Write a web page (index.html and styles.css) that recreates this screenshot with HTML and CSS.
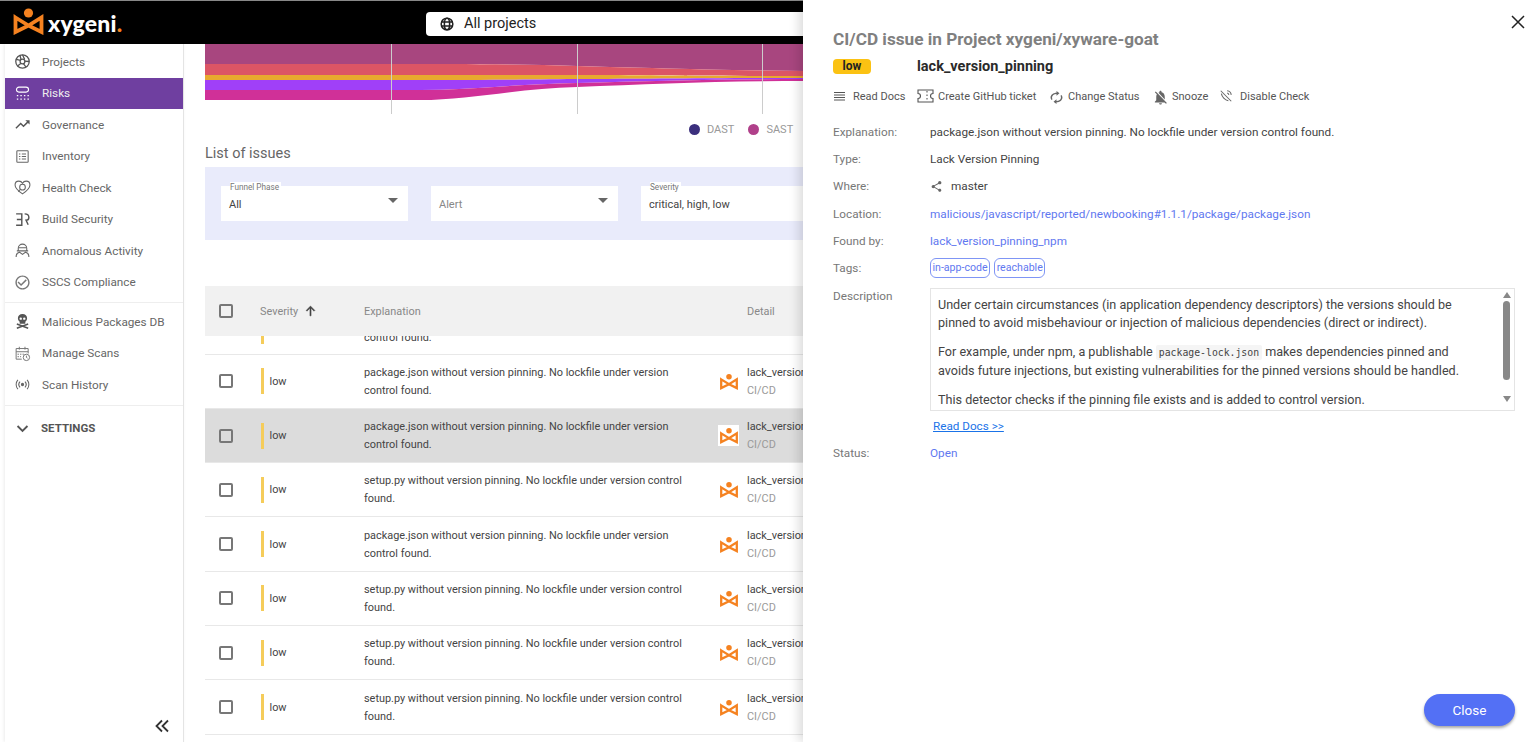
FILE: index.html
```html
<!DOCTYPE html>
<html lang="en">
<head>
  <meta charset="UTF-8" />
  <meta name="viewport" content="width=device-width, initial-scale=1.0">
  <title>Xygeni - Risks</title>
  <link rel="stylesheet" href="styles.css">
</head>
<body>
  <svg class="defs" width="0" height="0">
    <symbol id="logo" viewBox="0 0 30 28">
      <circle cx="15" cy="6" r="4.6" fill="#f58220"/>
      <path d="M2 10.500 L15 18.500 L28 10.500 V25 L15 18.500 L2 25 Z" fill="none" stroke="#f58220" stroke-width="3.800" stroke-linejoin="miter"/>
    </symbol>
  </svg>

  <header class="topbar">
    <div class="brand">
      <svg class="brand-mark" width="31" height="28"><use href="#logo"/></svg>
      <span class="brand-name">xygeni<b>.</b></span>
    </div>
    <div class="project-picker">
      <svg width="14" height="14" viewBox="0 0 24 24" fill="none" stroke="#222" stroke-width="2.600"><circle cx="12" cy="12" r="10"/><ellipse cx="12" cy="12" rx="4.500" ry="10"/><path d="M2 8.500h20M2 15.500h20"/></svg>
      <span>All projects</span>
    </div>
  </header>

  <div class="app">
    <nav class="sidebar">
      <a class="nav-item">
        <svg viewBox="0 0 24 24" fill="none" stroke="#555" stroke-width="1.800"><circle cx="12" cy="12" r="9.500"/><circle cx="12" cy="12" r="3.400"/><path d="M12 2.500l3 6.500M21.500 12l-7-.5M17 20l-4-5.500M5 18.500l5-4M3 9l6.500 1.500M8.500 3.500l1.500 6"/></svg>
        Projects
      </a>
      <a class="nav-item active">
        <svg viewBox="0 0 24 24" fill="none" stroke="#fff" stroke-width="1.600"><rect x="3.500" y="3" width="17" height="7" rx="3.500"/><path stroke-dasharray="2 3" d="M4 15h17M4 20h17"/></svg>
        Risks
      </a>
      <a class="nav-item">
        <svg viewBox="0 0 24 24" fill="#555"><path d="M16 6l2.290 2.290-4.880 4.880-4-4L2 16.590 3.410 18l6-6 4 4 6.300-6.290L22 12V6z"/></svg>
        Governance
      </a>
      <a class="nav-item">
        <svg viewBox="0 0 24 24" fill="none" stroke="#666" stroke-width="1.500"><rect x="4" y="4" width="16" height="16" rx="1"/><path d="M7 8.500h2M11 8.500h6M7 12h2M11 12h6M7 15.500h2M11 15.500h6"/></svg>
        Inventory
      </a>
      <a class="nav-item">
        <svg viewBox="0 0 24 24" fill="none" stroke="#666" stroke-width="1.500"><path d="M12 21C6 17 1.500 13 1.500 8.500 1.500 5 4 3 6.800 3 9 3 11 4.200 12 6c1-1.800 3-3 5.200-3C20 3 22.500 5 22.500 8.500 22.500 13 18 17 12 21z"/><circle cx="12" cy="11.500" r="4"/><path d="M9 14.500l-3 3.500"/></svg>
        Health Check
      </a>
      <a class="nav-item">
        <svg viewBox="0 0 24 24" fill="none" stroke="#555" stroke-width="2"><path d="M3 4h8v16H3M4 12h7M15 4c4 0 6 2.500 6 5s-2 4-4 4l3 6.500"/></svg>
        Build Security
      </a>
      <a class="nav-item">
        <svg viewBox="0 0 24 24" fill="none" stroke="#666" stroke-width="1.500"><path d="M6 12V9a6 6 0 0 1 12 0v3M4 12.500h16M7 8h10M3 21c0-4 2-6 5-6.500l4 3 4-3c3 .5 5 2.500 5 6.500"/></svg>
        Anomalous Activity
      </a>
      <a class="nav-item">
        <svg viewBox="0 0 24 24" fill="#777"><path d="M16.590 7.580L10 14.170l-3.590-3.580L5 12l5 5 8-8zM12 2C6.480 2 2 6.480 2 12s4.480 10 10 10 10-4.480 10-10S17.520 2 12 2zm0 18c-4.420 0-8-3.580-8-8s3.580-8 8-8 8 3.580 8 8-3.580 8-8 8z"/></svg>
        SSCS Compliance
      </a>
      <div class="nav-divider"></div>
      <a class="nav-item">
        <svg viewBox="0 0 24 24" fill="#555"><path d="M12 1.500c-4 0-6.500 2.500-6.500 6 0 2.300 1 3.800 2.500 4.800V15h8v-2.700c1.500-1 2.500-2.500 2.500-4.800 0-3.500-2.500-6-6.500-6z"/><circle cx="9.500" cy="8" r="1.700" fill="#fff"/><circle cx="14.500" cy="8" r="1.700" fill="#fff"/><path d="M4 15.500l16 6M20 15.500l-16 6" stroke="#555" stroke-width="2"/></svg>
        Malicious Packages DB
      </a>
      <a class="nav-item">
        <svg viewBox="0 0 24 24" fill="none" stroke="#777" stroke-width="1.400"><path d="M11 20H3V5h17v7M3 9.500h17M7.500 2.500v4M15.500 2.500v4"/><path stroke-dasharray="2 1.500" d="M5 13h9M5 16.500h5"/><circle cx="17.500" cy="17.500" r="4.500"/><path d="M17.500 15v2.500l1.500 1"/></svg>
        Manage Scans
      </a>
      <a class="nav-item">
        <svg viewBox="0 0 24 24" fill="none" stroke="#666" stroke-width="1.600"><circle cx="12" cy="12" r="1.500" fill="#666"/><path d="M8.500 8a6 6 0 0 0 0 8M15.500 8a6 6 0 0 1 0 8M5.500 5.500a10 10 0 0 0 0 13M18.500 5.500a10 10 0 0 1 0 13"/></svg>
        Scan History
      </a>
      <div class="nav-divider"></div>
      <a class="nav-item nav-section">
        <svg viewBox="0 0 24 24" fill="none" stroke="#555" stroke-width="2.600"><path d="M5 8.500l7 7 7-7"/></svg>
        SETTINGS
      </a>
      <div class="collapse-btn">
        <svg width="16" height="16" viewBox="0 0 16 16" fill="none" stroke="#333" stroke-width="1.800"><path d="M8 2.500L2.500 8 8 13.500M14 2.500L8.500 8 14 13.500"/></svg>
      </div>
    </nav>

    <main class="content">
      <svg class="chart" width="600" height="70" viewBox="205 44 600 70">
        <path fill="#a8467f" d="M205 44H805V71C700 70 620 67 577 66C520 64 450 64 391 64H205Z"/>
        <path fill="#dc5565" d="M205 64H391C450 64 520 64 577 66C620 67 700 70 805 71V76C700 76 640 75 577 75H205Z"/>
        <path fill="#e8a92f" d="M205 75H577C640 75 700 76 805 76V78C700 78 640 79 577 79C500 80 450 80 391 80H205Z"/>
        <path fill="#a040f8" d="M205 80H391C450 80 500 80 577 79C640 79 700 78 805 78V79C720 79 650 81 577 83C520 84 470 90 420 90H205Z"/>
        <path fill="#d03098" d="M205 90H420C470 90 520 84 577 83C650 81 720 79 805 79V81C720 81 650 84 577 87C520 88 470 100 420 100H205Z"/>
        <path stroke="#ccc" stroke-width="1" d="M391.500 44V114M577.500 44V114M762.500 44V114"/>
      </svg>

      <div class="legend">
        <span class="legend-item"><i class="dot dot-dast"></i>DAST</span>
        <span class="legend-item"><i class="dot dot-sast"></i>SAST</span>
      </div>

      <h2 class="section-title">List of issues</h2>

      <div class="filters">
        <div class="field"><label>Funnel Phase</label><span>All</span><i class="caret"></i></div>
        <div class="field"><span class="placeholder">Alert</span><i class="caret"></i></div>
        <div class="field"><label>Severity</label><span>critical, high, low</span><i class="caret"></i></div>
      </div>

      <div class="table">
        <div class="row head">
          <div class="cell-check"><i class="checkbox"></i></div>
          <div class="cell-sev">Severity
            <svg width="13" height="13" viewBox="0 0 24 24" fill="#444" stroke="#444" stroke-width="1"><path d="M4 12l1.410 1.410L11 7.830V22h2V7.830l5.580 5.590L20 12 12 4z" transform="translate(0 -2)"/></svg>
          </div>
          <div class="cell-exp">Explanation</div>
          <div class="cell-detail">Detail</div>
        </div>
        <div class="row clipped">
          <div class="cell-check"></div>
          <div class="cell-sev"><i class="sev-bar"></i></div>
          <div class="cell-exp">control found.</div>
          <div class="cell-detail"><em>CI/CD</em></div>
        </div>
        <div class="row">
          <div class="cell-check"><i class="checkbox"></i></div>
          <div class="cell-sev"><i class="sev-bar"></i>low</div>
          <div class="cell-exp">package.json without version pinning. No lockfile under version control found.</div>
          <div class="cell-logo"><svg width="18" height="17"><use href="#logo"/></svg></div>
          <div class="cell-detail">lack_version_pinning<em>CI/CD</em></div>
        </div>
        <div class="row selected">
          <div class="cell-check"><i class="checkbox"></i></div>
          <div class="cell-sev"><i class="sev-bar"></i>low</div>
          <div class="cell-exp">package.json without version pinning. No lockfile under version control found.</div>
          <div class="cell-logo"><svg width="18" height="17"><use href="#logo"/></svg></div>
          <div class="cell-detail">lack_version_pinning<em>CI/CD</em></div>
        </div>
        <div class="row">
          <div class="cell-check"><i class="checkbox"></i></div>
          <div class="cell-sev"><i class="sev-bar"></i>low</div>
          <div class="cell-exp">setup.py without version pinning. No lockfile under version control found.</div>
          <div class="cell-logo"><svg width="18" height="17"><use href="#logo"/></svg></div>
          <div class="cell-detail">lack_version_pinning<em>CI/CD</em></div>
        </div>
        <div class="row">
          <div class="cell-check"><i class="checkbox"></i></div>
          <div class="cell-sev"><i class="sev-bar"></i>low</div>
          <div class="cell-exp">package.json without version pinning. No lockfile under version control found.</div>
          <div class="cell-logo"><svg width="18" height="17"><use href="#logo"/></svg></div>
          <div class="cell-detail">lack_version_pinning<em>CI/CD</em></div>
        </div>
        <div class="row">
          <div class="cell-check"><i class="checkbox"></i></div>
          <div class="cell-sev"><i class="sev-bar"></i>low</div>
          <div class="cell-exp">setup.py without version pinning. No lockfile under version control found.</div>
          <div class="cell-logo"><svg width="18" height="17"><use href="#logo"/></svg></div>
          <div class="cell-detail">lack_version_pinning<em>CI/CD</em></div>
        </div>
        <div class="row">
          <div class="cell-check"><i class="checkbox"></i></div>
          <div class="cell-sev"><i class="sev-bar"></i>low</div>
          <div class="cell-exp">setup.py without version pinning. No lockfile under version control found.</div>
          <div class="cell-logo"><svg width="18" height="17"><use href="#logo"/></svg></div>
          <div class="cell-detail">lack_version_pinning<em>CI/CD</em></div>
        </div>
        <div class="row">
          <div class="cell-check"><i class="checkbox"></i></div>
          <div class="cell-sev"><i class="sev-bar"></i>low</div>
          <div class="cell-exp">setup.py without version pinning. No lockfile under version control found.</div>
          <div class="cell-logo"><svg width="18" height="17"><use href="#logo"/></svg></div>
          <div class="cell-detail">lack_version_pinning<em>CI/CD</em></div>
        </div>
      </div>
    </main>
  </div>

  <aside class="drawer">
    <svg class="drawer-close" width="14" height="14" viewBox="0 0 14 14" stroke="#222" stroke-width="1.500"><path d="M1 1l12 12M13 1L1 13"/></svg>
    <h1 class="drawer-title">CI/CD issue in Project xygeni/xyware-goat</h1>
    <div class="drawer-sub">
      <span class="badge-low">low</span>
      <span class="check-name">lack_version_pinning</span>
    </div>
    <div class="actions">
      <span class="action act-docs">
        <svg width="13" height="13" viewBox="0 0 13 13" stroke="#555" stroke-width="1"><path d="M1 2.500h11M1 5h11M1 7.500h11M1 10h11"/></svg>
        Read Docs
      </span>
      <span class="action act-ticket">
        <svg width="17" height="14" viewBox="0 0 17 14" fill="none" stroke="#555" stroke-width="1.100"><path d="M1 1h15v3.500a2.500 2.500 0 0 0 0 5V13H1V9.500a2.500 2.500 0 0 0 0-5z"/><path stroke-dasharray="1.500 2" d="M10 2v10"/></svg>
        Create GitHub ticket
      </span>
      <span class="action act-status">
        <svg class="sync-icon" width="17" height="17" viewBox="0 0 24 24" fill="#666"><path d="M12 4V1L8 5l4 4V6c3.310 0 6 2.690 6 6 0 1.010-.25 1.970-.7 2.800l1.460 1.460C19.540 15.030 20 13.570 20 12c0-4.420-3.580-8-8-8zm0 14c-3.310 0-6-2.690-6-6 0-1.010.25-1.970.7-2.800L5.240 7.740C4.460 8.970 4 10.430 4 12c0 4.420 3.580 8 8 8v3l4-4-4-4v3z"/></svg>
        Change Status
      </span>
      <span class="action act-snooze">
        <svg class="bell-icon" width="17" height="17" viewBox="0 0 24 24" fill="#666"><path d="M20 18.690L7.840 6.140 5.270 3.490 4 4.760l2.800 2.800v.01c-.52.990-.8 2.160-.8 3.420v5l-2 2v1h13.730l2 2L21 19.720l-1-1.030zM12 22c1.110 0 2-.89 2-2h-4c0 1.110.89 2 2 2zm6-7.320V11c0-3.080-1.640-5.640-4.500-6.320V4c0-.83-.67-1.500-1.500-1.500s-1.500.67-1.500 1.500v.68c-.15.03-.29.08-.42.12-.1.03-.2.07-.3.110h-.01c-.2.080-.4.170-.59.270-.01 0-.01 0-.02.010L18 14.680z"/></svg>
        Snooze
      </span>
      <span class="action act-disable">
        <svg width="14" height="14" viewBox="0 0 24 24" fill="none" stroke="#666" stroke-width="1.800"><path d="M3 3l18 18M14 3a8 8 0 0 1 7 7M14 7a4 4 0 0 1 3 3M4 8c1 5 6 11 12 12"/></svg>
        Disable Check
      </span>
    </div>

    <dl class="details">
      <dt>Explanation:</dt>
      <dd>package.json without version pinning. No lockfile under version control found.</dd>
      <dt>Type:</dt>
      <dd>Lack Version Pinning</dd>
      <dt>Where:</dt>
      <dd class="where">
        <svg width="13" height="13" viewBox="0 0 24 24" fill="#666"><path d="M18 16.080c-.76 0-1.440.3-1.960.77L8.910 12.700c.05-.23.09-.46.09-.7s-.04-.47-.09-.7l7.050-4.110c.54.5 1.250.81 2.040.81 1.660 0 3-1.340 3-3s-1.340-3-3-3-3 1.340-3 3c0 .24.04.47.09.7L8.040 9.810C7.500 9.310 6.790 9 6 9c-1.660 0-3 1.340-3 3s1.340 3 3 3c.79 0 1.500-.31 2.040-.81l7.120 4.160c-.05.21-.08.43-.08.65 0 1.610 1.310 2.920 2.920 2.920s2.920-1.310 2.920-2.920-1.310-2.920-2.920-2.920z"/></svg>
        master
      </dd>
      <dt>Location:</dt>
      <dd class="link">malicious/javascript/reported/newbooking#1.1.1/package/package.json</dd>
      <dt>Found by:</dt>
      <dd class="link">lack_version_pinning_npm</dd>
      <dt>Tags:</dt>
      <dd class="tags"><span>in-app-code</span><span>reachable</span></dd>
      <dt class="desc-label">Description</dt>
      <dd class="desc-cell">
        <div class="desc-box">
          <div class="desc-text">
            <p>Under certain circumstances (in application dependency descriptors) the versions should be pinned to avoid misbehaviour or injection of malicious dependencies (direct or indirect).</p>
            <p>For example, under npm, a publishable <code>package-lock.json</code> makes dependencies pinned and avoids future injections, but existing vulnerabilities for the pinned versions should be handled.</p>
            <p>This detector checks if the pinning file exists and is added to control version.</p>
          </div>
          <div class="scrollbar">
            <i class="arrow-up"></i>
            <i class="thumb"></i>
            <i class="arrow-down"></i>
          </div>
        </div>
        <a class="read-docs">Read Docs &gt;&gt;</a>
      </dd>
      <dt>Status:</dt>
      <dd class="link">Open</dd>
    </dl>

    <button class="close-btn">Close</button>
  </aside>
</body>
</html>
```

FILE: styles.css
```css
html, body {
  margin: 0;
  padding: 0;
  height: 100%;
  overflow: hidden;
}
body {
  font-family: Roboto, "Liberation Sans", sans-serif;
  background-color: #fff;
  color: #333;
  display: flex;
  flex-direction: column;
}
.defs {
  position: absolute;
}

/* top bar */
.topbar {
  flex: none;
  height: 43px;
  border-top: 1px solid #888;
  background-color: #000;
  display: flex;
  align-items: center;
  padding-left: 13px;
}
.brand {
  width: 413px;
  display: flex;
  align-items: center;
  gap: 4px;
}
.brand-mark {
  margin-top: -4px;
}
.brand-name {
  color: #fff;
  font-family: Lato, sans-serif;
  font-weight: 900;
  font-size: 23px;
  letter-spacing: 0.2px;
  line-height: 28px;
}
.brand-name b {
  color: #f58220;
}
.project-picker {
  width: 600px;
  height: 24px;
  margin-top: 2px;
  background-color: #fff;
  border-radius: 4px;
  display: flex;
  align-items: center;
  gap: 10px;
  padding-left: 14px;
  font-size: 14.5px;
  color: #222;
}

/* sidebar */
.app {
  flex: 1;
  display: flex;
  min-height: 0;
}
.sidebar {
  flex: none;
  width: 178px;
  margin-left: 5px;
  padding-top: 2px;
  border-right: 1px solid #e4e4e4;
  box-sizing: content-box;
  position: relative;
  box-shadow: -1px 0 3px rgba(0, 0, 0, 0.08);
}
.nav-item {
  height: 31.5px;
  display: flex;
  align-items: center;
  gap: 11px;
  padding-left: 9px;
  font-size: 11.75px;
  color: #666;
}
.nav-item svg {
  width: 17px;
  height: 17px;
  flex: none;
}
.nav-item.active {
  background-color: #6f3fa0;
  color: #eee;
}
.nav-divider {
  height: 1px;
  margin: 4px 0 3px;
  background-color: #eee;
}
.nav-section {
  margin-top: 7px;
  font-weight: 700;
  font-size: 11.5px;
  gap: 10px;
  color: #555;
}
.collapse-btn {
  position: absolute;
  right: 13px;
  bottom: 4px;
}

/* main column */
.content {
  flex: 1;
  min-width: 0;
  padding-left: 21px;
  overflow: hidden;
}
.chart {
  display: block;
}
.legend {
  display: flex;
  gap: 14px;
  height: 14px;
  margin: 8px 0 0 484px;
  font-size: 11px;
  color: #999;
  white-space: nowrap;
}
.legend-item {
  display: flex;
  align-items: center;
  gap: 7px;
}
.dot {
  width: 11px;
  height: 11px;
  border-radius: 50%;
}
.dot-dast {
  background-color: #3b2f7d;
}
.dot-sast {
  background-color: #b0408a;
}
.section-title {
  margin: 9px 0 0;
  height: 22px;
  font-size: 14.5px;
  line-height: 18px;
  font-weight: 400;
  color: #666;
}
.filters {
  height: 73px;
  margin-right: -20px;
  padding: 19px 16px 0;
  box-sizing: border-box;
  background-color: #e9ebfb;
  display: flex;
  gap: 23px;
}
.field {
  width: 187px;
  height: 35px;
  box-sizing: border-box;
  padding: 12px 8px 0;
  background-color: #fff;
  position: relative;
  font-size: 11px;
  line-height: 14px;
  color: #444;
}
.field label {
  position: absolute;
  left: 9px;
  top: -4px;
  font-size: 8.2px;
  line-height: 10px;
  color: #777;
  background-color: #fff;
  padding-right: 2px;
}
.field .placeholder {
  color: #888;
}
.caret {
  position: absolute;
  right: 10px;
  top: 12px;
  border-left: 5px solid transparent;
  border-right: 5px solid transparent;
  border-top: 5px solid #666;
}

/* table */
.table {
  margin: 46px -600px 0 0;
}
.row {
  height: 54.3px;
  box-sizing: border-box;
  border-bottom: 1px solid #e8e8e8;
  display: flex;
  align-items: center;
  font-size: 10.9px;
  color: #444;
}
.row.head {
  height: 50px;
  background-color: #f1f1f1;
  border-bottom: none;
  color: #888;
}
.row.clipped {
  height: 18.6px;
  align-items: flex-start;
  overflow: hidden;
}
.row.clipped .cell-exp,
.row.clipped .cell-detail {
  margin-top: -8px;
}
.row.clipped .sev-bar {
  height: 8px;
}
.row.clipped .cell-detail {
  margin-left: 383px;
}
.row.selected {
  background-color: #dcdcdc;
}
.cell-check {
  width: 55px;
  padding-left: 14px;
  box-sizing: border-box;
  flex: none;
}
.checkbox {
  display: block;
  width: 14px;
  height: 14px;
  box-sizing: border-box;
  border: 2px solid #777;
  border-radius: 2px;
  background-color: #fff;
}
.row.selected .checkbox {
  background-color: transparent;
}
.head .checkbox {
  background-color: transparent;
}
.cell-sev {
  width: 104px;
  flex: none;
  display: flex;
  align-items: center;
  gap: 6px;
  padding-left: 1px;
  box-sizing: border-box;
}
.head .cell-sev {
  padding-left: 0;
}
.sev-bar {
  width: 2.5px;
  height: 26px;
  background-color: #f5cc5a;
}
.cell-exp {
  width: 329px;
  flex: none;
  padding-top: 1px;
  line-height: 18px;
}
.row .cell-exp {
  padding-right: 4px;
  box-sizing: border-box;
}
.head .cell-exp {
  width: 383px;
}
.cell-logo {
  width: 21px;
  height: 21px;
  margin: 0 8px 0 25px;
  flex: none;
  display: flex;
  align-items: center;
  justify-content: center;
}
.selected .cell-logo {
  background-color: #fff;
}
.cell-detail {
  padding-top: 1px;
  line-height: 18px;
  white-space: nowrap;
}
.cell-detail em {
  display: block;
  font-style: normal;
  color: #999;
}

/* issue drawer */
.drawer {
  position: absolute;
  top: 0;
  right: 0;
  bottom: 0;
  width: 733px;
  box-sizing: border-box;
  padding: 29px 21px 0 30px;
  background-color: #fff;
  box-shadow: -4px 0 10px rgba(0, 0, 0, 0.14);
}
.drawer-close {
  position: absolute;
  right: 11px;
  top: 15px;
}
.drawer-title {
  margin: 0;
  font-size: 17.2px;
  line-height: 21px;
  font-weight: 700;
  color: #808080;
}
.drawer-sub {
  display: flex;
  align-items: center;
  margin-top: 7px;
  height: 18px;
}
.badge-low {
  width: 38px;
  height: 15px;
  border-radius: 4px;
  background-color: #fbc213;
  color: #222;
  font-size: 12px;
  font-weight: 700;
  line-height: 15px;
  text-align: center;
}
.check-name {
  margin-left: 46px;
  font-size: 14.5px;
  font-weight: 700;
  color: #2a2a2a;
}
.actions {
  display: flex;
  align-items: center;
  height: 20px;
  margin-top: 11px;
  font-size: 11px;
  color: #555;
  white-space: nowrap;
}
.action {
  display: flex;
  align-items: center;
}
.act-docs { width: 84px; gap: 7px; }
.act-ticket { width: 131px; gap: 4px; }
.act-status { width: 104px; gap: 3px; }
.act-snooze { width: 67px; gap: 3px; }
.act-disable { gap: 7px; }
.sync-icon {
  transform: scale(-1.05, 0.85);
  margin-top: 3px;
}
.bell-icon {
  margin-top: 3px;
}
.details {
  margin: 12.5px 0 0;
  display: grid;
  grid-template-columns: 97px 1fr;
  grid-auto-rows: minmax(27.2px, auto);
  align-items: center;
  font-size: 11.75px;
}
.details dt {
  color: #777;
}
.details dd {
  margin: 0;
  color: #444;
}
.details .link {
  color: #5f78f0;
}
.where {
  display: flex;
  align-items: center;
  gap: 8px;
}
.tags {
  display: flex;
  gap: 4px;
}
.tags span {
  border: 1px solid #7f95f5;
  border-radius: 6px;
  padding: 0 1.5px;
  height: 18px;
  line-height: 18px;
  font-size: 10.6px;
  color: #5f78f0;
}
.details .desc-label {
  align-self: start;
  margin-top: 7px;
}
.desc-cell {
  padding-top: 6px;
}
.desc-box {
  height: 123px;
  box-sizing: border-box;
  border: 1px solid #e4e4e4;
  display: flex;
  overflow: hidden;
}
.desc-text {
  flex: 1;
  padding: 7px 12px 0 7px;
  font-size: 12.6px;
  line-height: 18px;
  color: #444;
}
.desc-text p {
  margin: 0 0 11px;
}
.desc-text code {
  font-family: "DejaVu Sans Mono", monospace;
  font-size: 9.8px;
  background-color: #f5f5f5;
  padding: 2px 3px;
  border-radius: 2px;
}
.scrollbar {
  width: 15px;
  flex: none;
  display: flex;
  flex-direction: column;
  align-items: center;
  padding-top: 3px;
}
.arrow-up {
  border-left: 4px solid transparent;
  border-right: 4px solid transparent;
  border-bottom: 6px solid #888;
}
.thumb {
  width: 7px;
  height: 79px;
  margin: 3px 0 16px;
  border-radius: 4px;
  background-color: #888;
}
.arrow-down {
  border-left: 4px solid transparent;
  border-right: 4px solid transparent;
  border-top: 6px solid #888;
}
.read-docs {
  display: block;
  margin: 8px 0 6px 3px;
  font-size: 11.7px;
  line-height: 15px;
  color: #1a73e8;
  text-decoration: underline;
}
.close-btn {
  position: absolute;
  right: 21px;
  bottom: 16px;
  width: 91px;
  height: 32px;
  border: none;
  border-radius: 16px;
  background-color: #5370f5;
  color: #fff;
  font-family: inherit;
  font-size: 13.5px;
  box-shadow: 0 2px 3px rgba(0, 0, 0, 0.35);
}
```
